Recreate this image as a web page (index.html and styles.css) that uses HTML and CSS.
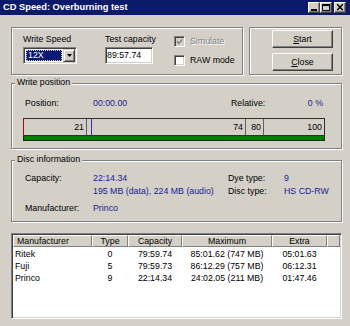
FILE: index.html
```html
<!DOCTYPE html>
<html>
<head>
<meta charset="utf-8">
<link rel="stylesheet" href="styles.css">
</head>
<body>
<div class="window">
  <div class="titlebar">
    <span class="title">CD Speed: Overburning test</span>
    <div class="tbtns">
      <span class="tbtn"><svg width="10" height="9" viewBox="0 0 10 9"><rect x="2" y="6" width="6" height="2" fill="#000"/></svg></span>
      <span class="tbtn"><svg width="10" height="9" viewBox="0 0 10 9"><path d="M1.5 1.5h7v6h-7z" fill="none" stroke="#000"/><rect x="1" y="1" width="8" height="2" fill="#000"/></svg></span>
      <span class="tbtn close"><svg width="10" height="9" viewBox="0 0 10 9"><path d="M2.2 1.2l5.6 6M7.8 1.2l-5.6 6" stroke="#000" stroke-width="1.5"/></svg></span>
    </div>
  </div>
  <div class="client">
    <div class="row1">
      <div class="group g-settings">
        <div class="field f-speed">
          <span class="lbl">Write Speed</span>
          <div class="combo">
            <span class="combo-val"><span class="sel">12X</span></span>
            <span class="combo-btn"><svg width="5" height="3" viewBox="0 0 5 3"><path d="M0 0h5l-2.5 3z" fill="#000"/></svg></span>
          </div>
        </div>
        <div class="field f-cap">
          <span class="lbl">Test capacity</span>
          <div class="edit">89:57.74</div>
        </div>
        <div class="checks">
          <div class="check disabled"><span class="box"><svg width="7" height="7" viewBox="0 0 7 7"><path d="M0.8 3.2l2 2 3.6-3.8" fill="none" stroke="#808080" stroke-width="1.5"/></svg></span><span class="clabel">Simulate</span></div>
          <div class="check"><span class="box"></span><span class="clabel">RAW mode</span></div>
        </div>
      </div>
      <div class="group g-buttons">
        <div class="btn"><span><u>S</u>tart</span></div>
        <div class="btn"><span><u>C</u>lose</span></div>
      </div>
    </div>

    <div class="group g-pos">
      <span class="legend">Write position</span>
      <div class="pos-row">
        <span class="k k1">Position:</span>
        <span class="v v1">00:00.00</span>
        <span class="k k2">Relative:</span>
        <span class="v v2">0 %</span>
      </div>
      <div class="bar">
        <div class="seg" style="width:21%">21</div>
        <div class="seg" style="width:53%">74</div>
        <div class="seg" style="width:6%">80</div>
        <div class="seg last" style="width:20%">100</div>
        <span class="marker" style="left:67px"></span>
      </div>
      <div class="gbar"></div>
    </div>

    <div class="group g-disc">
      <span class="legend">Disc information</span>
      <span class="k">Capacity:</span>
      <span class="v">22:14.34</span>
      <span class="k">Dye type:</span>
      <span class="v">9</span>
      <span class="k"></span>
      <span class="v">195 MB (data), 224 MB (audio)</span>
      <span class="k">Disc type:</span>
      <span class="v">HS CD-RW</span>
      <span class="k">Manufacturer:</span>
      <span class="v">Princo</span>
    </div>

    <div class="list">
      <div class="lv-head">
        <span class="h-left">Manufacturer</span>
        <span>Type</span>
        <span>Capacity</span>
        <span>Maximum</span>
        <span>Extra</span>
        <span></span>
      </div>
      <div class="lv-body">
        <div class="lv-row"><span class="c-left">Ritek</span><span>0</span><span>79:59.74</span><span>85:01.62 (747 MB)</span><span>05:01.63</span></div>
        <div class="lv-row"><span class="c-left">Fuji</span><span>5</span><span>79:59.73</span><span>86:12.29 (757 MB)</span><span>06:12.31</span></div>
        <div class="lv-row"><span class="c-left">Princo</span><span>9</span><span>22:14.34</span><span>24:02.05 (211 MB)</span><span>01:47.46</span></div>
      </div>
    </div>
  </div>
</div>
</body>
</html>
```

FILE: styles.css
```css
* { box-sizing: border-box; }
html, body { margin: 0; padding: 0; }
body {
  width: 350px;
  height: 326px;
  background: #d4d0c8;
  font-family: "Liberation Sans", Arial, sans-serif;
  font-size: 8.8px;
  line-height: 11px;
  color: #000;
  overflow: hidden;
}
.window {
  width: 350px;
  height: 326px;
  display: flex;
  flex-direction: column;
}
.titlebar {
  height: 15px;
  flex: none;
  background: #0c1a6c;
  display: flex;
  align-items: flex-start;
  justify-content: space-between;
}
.title {
  color: #fff;
  font-weight: bold;
  font-size: 9.3px;
  line-height: 15px;
  padding-left: 3px;
  white-space: nowrap;
}
.tbtns {
  display: flex;
  padding-top: 2px;
  padding-right: 4px;
}
.tbtn {
  width: 12px;
  height: 11px;
  background: #d4d0c8;
  border: 1px solid;
  border-color: #fff #404040 #404040 #fff;
  box-shadow: inset -1px -1px #808080;
  display: flex;
}
.tbtn svg { display: block; }
.tbtn.close { margin-left: 2px; }

.client {
  padding: 12px 8px 0 11px;
  display: flex;
  flex-direction: column;
}

.group {
  position: relative;
  border: 1px solid #808080;
  box-shadow: inset 1px 1px #fff, 1px 1px #fff;
}
.legend {
  position: absolute;
  top: -7px;
  left: 3px;
  padding: 0 2px;
  background: #d4d0c8;
  line-height: 11px;
  white-space: nowrap;
}

/* row 1 */
.row1 {
  display: flex;
  gap: 6px;
  height: 48px;
}
.g-settings {
  width: 232px;
  display: flex;
  padding: 6px 0 0 11px;
}
.field {
  display: flex;
  flex-direction: column;
}
.f-speed { width: 54px; }
.f-cap { width: 48px; margin-left: 28px; }
.lbl { height: 11px; white-space: nowrap; }

.combo {
  margin-top: 2px;
  height: 17px;
  display: flex;
  background: #fff;
  border: 1px solid;
  border-color: #808080 #fff #fff #808080;
  box-shadow: inset 1px 1px #404040, inset -1px -1px #d4d0c8;
  padding: 1px;
}
.combo-val {
  flex: 1;
  display: flex;
  padding: 1px;
}
.sel {
  flex: 1;
  background: #0a1a70;
  color: #fff;
  border: 1px dotted #c8c8ff;
  line-height: 9px;
  padding-left: 1px;
}
.combo-btn {
  width: 12px;
  height: 13px;
  background: #d4d0c8;
  border: 1px solid;
  border-color: #d4d0c8 #404040 #404040 #d4d0c8;
  box-shadow: inset 1px 1px #fff, inset -1px -1px #808080;
  display: flex;
  align-items: center;
  justify-content: center;
}
.combo-btn svg { display: block; }

.edit {
  margin-top: 2px;
  height: 17px;
  background: #fff;
  border: 1px solid;
  border-color: #808080 #fff #fff #808080;
  box-shadow: inset 1px 1px #404040, inset -1px -1px #d4d0c8;
  padding: 1px;
  line-height: 13px;
  white-space: nowrap;
}

.checks {
  margin-left: 21px;
  padding-top: 2px;
  display: flex;
  flex-direction: column;
  gap: 8px;
}
.check {
  display: flex;
  align-items: center;
  height: 11px;
  gap: 5px;
}
.box {
  width: 11px;
  height: 11px;
  background: #fff;
  border: 1px solid;
  border-color: #808080 #fff #fff #808080;
  box-shadow: inset 1px 1px #404040, inset -1px -1px #d4d0c8;
  display: flex;
  align-items: center;
  justify-content: center;
}
.box svg { display: block; }
.check.disabled .box { background: #d4d0c8; }
.check.disabled .clabel {
  color: #808080;
  text-shadow: 1px 1px 0 #fff;
}
.clabel { white-space: nowrap; }

.g-buttons {
  width: 93px;
  padding: 2px 0 0 22px;
  display: flex;
  flex-direction: column;
  gap: 5px;
}
.btn {
  width: 61px;
  height: 18px;
  border: 1px solid;
  border-color: #fff #404040 #404040 #fff;
  box-shadow: inset -1px -1px #808080;
  display: flex;
  align-items: center;
  justify-content: center;
}
.btn u { text-decoration: underline; }

/* write position */
.g-pos {
  margin-top: 8px;
  height: 66px;
  padding: 14px 16px 7px 11px;
}
.pos-row {
  display: flex;
  height: 11px;
  padding: 0 2px;
  white-space: nowrap;
}
.k1 { width: 68px; }
.v1 { width: 138px; }
.v2 { margin-left: auto; }
.v { color: #202090; }

.bar {
  margin-top: 9px;
  height: 18px;
  display: flex;
  position: relative;
  border: 1px solid #303030;
  border-left-color: #c00000;
}
.seg {
  height: 16px;
  border-right: 1px solid #606060;
  text-align: right;
  padding-right: 2px;
  line-height: 16px;
}
.seg.last { border-right: 0; }
.marker {
  position: absolute;
  top: 0;
  bottom: 0;
  width: 1px;
  background: #3030d0;
}
.gbar {
  height: 5px;
  background: #008000;
  border: 1px solid #0a300a;
  border-top: 0;
}

/* disc information */
.g-disc {
  margin-top: 11px;
  height: 62px;
  padding: 12px 0 7px 13px;
  display: grid;
  grid-template-columns: 68px 135px 56px 1fr;
  grid-template-rows: 13px 17px 11px;
  align-items: start;
  white-space: nowrap;
}
.g-disc .k, .g-disc .v { height: 11px; }

/* list view */
.list {
  margin-top: 11px;
  height: 86px;
  background: #fff;
  border: 1px solid;
  border-color: #808080 #fff #fff #808080;
  box-shadow: inset 1px 1px #404040, inset -1px -1px #d4d0c8;
  padding: 1px;
}
.lv-head, .lv-row {
  display: grid;
  grid-template-columns: 79px 36px 54px 90px 55px 1fr;
}
.lv-head { height: 12px; }
.lv-head span {
  background: #d4d0c8;
  border: 1px solid;
  border-color: #fff #808080 #808080 #fff;
  text-align: center;
  line-height: 10px;
  white-space: nowrap;
  overflow: hidden;
}
.lv-head .h-left { text-align: left; padding-left: 3px; }
.lv-body { padding-top: 1px; }
.lv-row { height: 12px; line-height: 12px; }
.lv-row span { text-align: center; white-space: nowrap; }
.lv-row .c-left { text-align: left; padding-left: 2px; }
```
